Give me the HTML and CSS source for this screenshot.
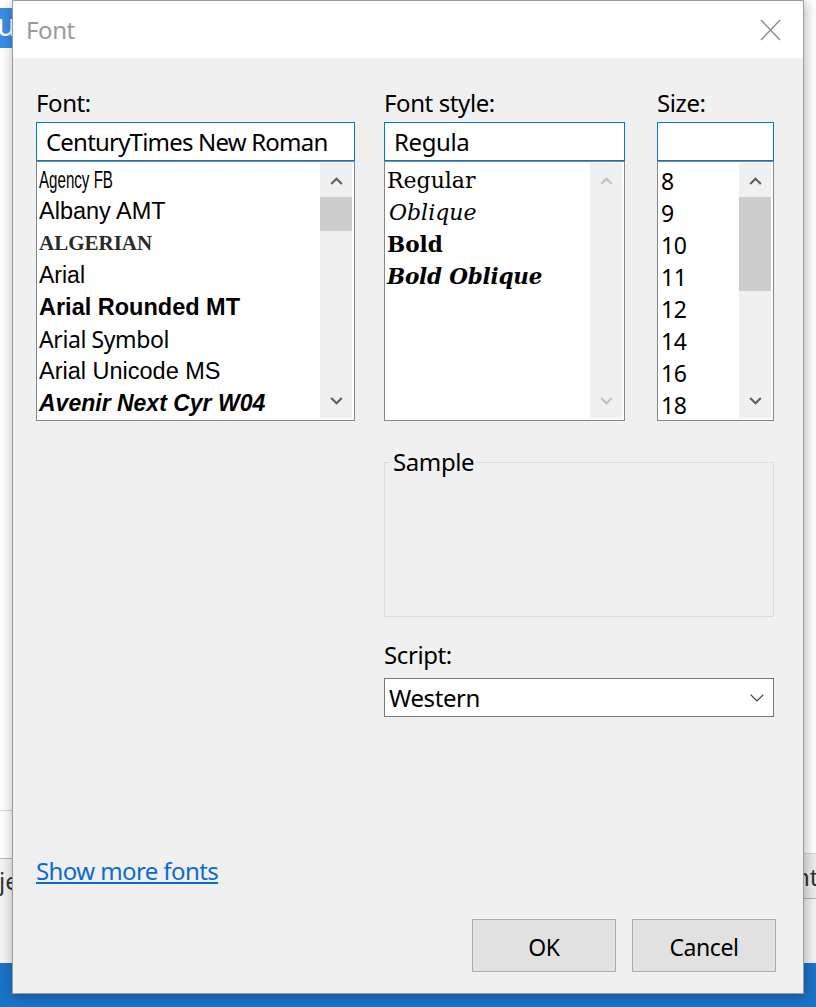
FILE: index.html
```html
<!DOCTYPE html>
<html lang="en">
<head>
<meta charset="utf-8">
<title>Font</title>
<link rel="stylesheet" href="styles.css">
</head>
<body>
<div class="desk">
  <div class="bg-tab"><span>u</span></div>
  <div class="bg-line"></div>
  <div class="bg-left-panel"><span>je</span></div>
  <div class="bg-right-panel"><span>nt</span></div>
  <div class="bg-right-lower"></div>
  <div class="taskbar"></div>
</div>

<div class="dialog">
  <div class="titlebar">
    <div class="title">Font</div>
    <svg class="close" width="21" height="22" viewBox="0 0 21 22"><path d="M1 1 L20 21 M20 1 L1 21" stroke="#8c8c8c" stroke-width="1.4" fill="none"/></svg>
  </div>

  <div class="body">
    <div class="cols">
      <div class="col col-font">
        <div class="label">Font:</div>
        <div class="input input-font">CenturyTimes New Roman</div>
        <div class="list">
          <div class="items items-font">
            <div class="item f-agency"><span>Agency FB</span></div>
            <div class="item f-arial f-albany">Albany AMT</div>
            <div class="item f-algerian">ALGERIAN</div>
            <div class="item f-arial">Arial</div>
            <div class="item f-rounded">Arial Rounded MT</div>
            <div class="item f-symbol">Arial Symbol</div>
            <div class="item f-arial f-unicode">Arial Unicode MS</div>
            <div class="item f-avenir">Avenir Next Cyr W04</div>
          </div>
          <div class="scroll">
            <div class="sb-btn sb-up"><svg width="13" height="8" viewBox="0 0 13 8"><path d="M1.2 7 L6.5 1.7 L11.8 7" stroke="#606060" stroke-width="2.2" fill="none"/></svg></div>
            <div class="thumb thumb-short"></div>
            <div class="sb-space"></div>
            <div class="sb-btn sb-down"><svg width="13" height="8" viewBox="0 0 13 8"><path d="M1.2 1 L6.5 6.3 L11.8 1" stroke="#606060" stroke-width="2.2" fill="none"/></svg></div>
          </div>
        </div>
      </div>

      <div class="col col-style">
        <div class="label">Font style:</div>
        <div class="input">Regula</div>
        <div class="list">
          <div class="items items-style">
            <div class="item s-regular">Regular</div>
            <div class="item s-oblique">Oblique</div>
            <div class="item s-bold">Bold</div>
            <div class="item s-boldoblique">Bold Oblique</div>
          </div>
          <div class="scroll">
            <div class="sb-btn sb-up"><svg width="13" height="8" viewBox="0 0 13 8"><path d="M1.2 7 L6.5 1.7 L11.8 7" stroke="#c2c2c2" stroke-width="2.2" fill="none"/></svg></div>
            <div class="sb-space"></div>
            <div class="sb-btn sb-down"><svg width="13" height="8" viewBox="0 0 13 8"><path d="M1.2 1 L6.5 6.3 L11.8 1" stroke="#c2c2c2" stroke-width="2.2" fill="none"/></svg></div>
          </div>
        </div>
      </div>

      <div class="col col-size">
        <div class="label">Size:</div>
        <div class="input"></div>
        <div class="list">
          <div class="items items-size">
            <div class="item">8</div>
            <div class="item">9</div>
            <div class="item">10</div>
            <div class="item">11</div>
            <div class="item">12</div>
            <div class="item">14</div>
            <div class="item">16</div>
            <div class="item">18</div>
          </div>
          <div class="scroll">
            <div class="sb-btn sb-up"><svg width="13" height="8" viewBox="0 0 13 8"><path d="M1.2 7 L6.5 1.7 L11.8 7" stroke="#606060" stroke-width="2.2" fill="none"/></svg></div>
            <div class="thumb thumb-tall"></div>
            <div class="sb-space"></div>
            <div class="sb-btn sb-down"><svg width="13" height="8" viewBox="0 0 13 8"><path d="M1.2 1 L6.5 6.3 L11.8 1" stroke="#606060" stroke-width="2.2" fill="none"/></svg></div>
          </div>
        </div>
      </div>
    </div>

    <div class="lower">
      <fieldset class="sample">
        <legend>Sample</legend>
      </fieldset>
      <div class="label script-label">Script:</div>
      <div class="select">
        <span>Western</span>
        <svg width="14" height="8" viewBox="0 0 14 8"><path d="M0.6 0.6 L7 7 L13.4 0.6" stroke="#3c3c3c" stroke-width="1.2" fill="none"/></svg>
      </div>
    </div>

    <a class="link" href="#">Show more fonts</a>

    <div class="buttons">
      <button class="btn">OK</button>
      <button class="btn">Cancel</button>
    </div>
  </div>
</div>
</body>
</html>
```

FILE: styles.css
```css
* { box-sizing: border-box; }

html, body {
  margin: 0;
  padding: 0;
}

body {
  width: 816px;
  height: 1007px;
  position: relative;
  overflow: hidden;
  background: #ffffff;
  font-family: "Noto Sans", "Open Sans", sans-serif;
  color: #000;
}

/* ---------- desktop behind the dialog ---------- */
.desk { position: absolute; inset: 0; }

.bg-tab {
  position: absolute;
  left: 0; top: 8px;
  width: 12px; height: 40px;
  background: #3a8de6;
  overflow: hidden;
  color: #fff;
  font-size: 30px;
  line-height: 34px;
}
.bg-tab span { display: block; margin-left: -3px; }

.bg-line {
  position: absolute;
  left: 0; top: 810px;
  width: 12px; height: 1px;
  background: #d9d9d9;
}

.bg-left-panel {
  position: absolute;
  left: 0; top: 858px;
  width: 12px; height: 105px;
  background: #f4f4f4;
  border-top: 1px solid #b8b8b8;
  overflow: hidden;
  font-size: 24px;
  line-height: 26px;
  color: #333;
}
.bg-left-panel span { display: block; margin: 9px 0 0 -1px; white-space: nowrap; }

.bg-right-panel {
  position: absolute;
  left: 804px; top: 853px;
  width: 12px; height: 46px;
  background: #ededed;
  border-top: 1px solid #d6d6d6;
  border-bottom: 1px solid #b3b3b3;
  overflow: hidden;
  font-size: 24px;
  line-height: 26px;
  color: #333;
}
.bg-right-panel span { display: block; margin: 10px 0 0 -9px; white-space: nowrap; }

.bg-right-lower {
  position: absolute;
  left: 804px; top: 899px;
  width: 12px; height: 64px;
  background: #f3f3f3;
}

.taskbar {
  position: absolute;
  left: 0; top: 963px;
  width: 816px; height: 44px;
  background: #1b73c9;
}

/* ---------- dialog window ---------- */
.dialog {
  position: absolute;
  left: 12px; top: 0;
  width: 792px;
  border: 1px solid #9c9c9c;
  background: #f0f0f0;
  box-shadow: 1px 2px 12px rgba(0, 0, 0, 0.32);
}

.titlebar {
  height: 57px;
  background: #ffffff;
  display: flex;
  justify-content: space-between;
  align-items: flex-start;
  padding: 16px 22px 0 13px;
}
.title {
  font-size: 24px;
  line-height: 26px;
  color: #9a9a9a;
  letter-spacing: -0.4px;
}
.close { margin-top: 2px; }

.body {
  padding: 32px 27px 21px 23px;
}

.cols { display: flex; }
.col-font { width: 319px; }
.col-style { width: 241px; margin-left: 29px; }
.col-size { width: 117px; margin-left: 32px; }

.label {
  font-size: 24px;
  line-height: 26px;
  letter-spacing: -0.4px;
  margin-bottom: 6px;
}

.input {
  height: 39px;
  border: 1px solid #0078d7;
  background: #fff;
  padding-left: 9px;
  font-size: 24px;
  line-height: 37px;
  letter-spacing: -0.4px;
  white-space: nowrap;
  overflow: hidden;
}
.input-font { letter-spacing: -0.8px; }

.list {
  height: 260px;
  border: 1px solid #828790;
  background: #fff;
  display: flex;
}

.items {
  flex: 1;
  padding-left: 2px;
  overflow: hidden;
}
.items-font { padding-top: 1px; }
.items-style { padding-top: 3px; }
.items-size { padding-left: 3px; padding-top: 3px; }

.item {
  height: 32px;
  line-height: 32px;
  white-space: nowrap;
  font-size: 23px;
  letter-spacing: -0.4px;
}

/* font-list item faces */
.f-agency span {
  display: inline-block;
  font-family: "Liberation Sans", sans-serif;
  font-size: 24px;
  letter-spacing: 0;
  transform: scaleX(0.63);
  transform-origin: left center;
}
.f-arial {
  font-family: "Liberation Sans", Arial, sans-serif;
  letter-spacing: 0;
}
.f-albany { font-size: 23.5px; }
.f-unicode { font-size: 23.5px; }
.f-algerian {
  font-family: "Liberation Serif", serif;
  font-weight: bold;
  font-size: 21px;
  letter-spacing: 0;
  color: #2a2a2a;
}
.f-rounded {
  font-family: "Liberation Sans", Arial, sans-serif;
  font-weight: bold;
  font-size: 23.5px;
  letter-spacing: 0;
}
.f-symbol { font-size: 23px; }
.f-avenir {
  font-family: "Liberation Sans", Arial, sans-serif;
  font-weight: bold;
  font-style: italic;
  font-size: 23px;
  letter-spacing: 0;
}

/* style-list item faces */
.s-regular, .s-oblique, .s-bold, .s-boldoblique {
  font-family: "DejaVu Serif", serif;
  font-size: 22px;
  letter-spacing: 0;
}
.s-oblique { font-style: italic; padding-left: 2px; }
.s-bold { font-weight: bold; font-size: 21.5px; }
.s-boldoblique { font-weight: bold; font-style: italic; font-size: 21.5px; letter-spacing: -0.2px; }

/* scrollbars */
.scroll {
  width: 32px;
  margin: 1px 2px 2px 0;
  background: #f0f0f0;
  display: flex;
  flex-direction: column;
}
.sb-btn {
  height: 34px;
  display: flex;
  align-items: center;
  justify-content: center;
}
.sb-up { padding-top: 2px; }
.sb-space { flex: 1; }
.thumb { background: #cdcdcd; }
.thumb-short { height: 34px; }
.thumb-tall { height: 94px; }

/* lower section */
.lower {
  margin-left: 348px;
  width: 390px;
}

.sample {
  margin: 28px 0 0;
  padding: 0;
  border: 1px solid #dcdcdc;
  height: 168px;
  min-width: 0;
}
.sample legend {
  margin-left: 6px;
  padding: 0 2px;
  font-size: 24px;
  line-height: 26px;
  letter-spacing: -0.4px;
}

.script-label {
  margin-top: 25px;
  margin-bottom: 10px;
}

.select {
  height: 39px;
  border: 1px solid #7a7a7a;
  background: #fff;
  display: flex;
  align-items: center;
  justify-content: space-between;
  padding: 0 9px 0 4px;
  font-size: 24px;
  line-height: 37px;
  letter-spacing: -0.4px;
}

.link {
  display: block;
  width: fit-content;
  margin-top: 141px;
  font-size: 24px;
  line-height: 26px;
  letter-spacing: -0.6px;
  color: #0a6ccf;
  text-decoration: underline;
  text-underline-offset: 2px;
}

.buttons {
  display: flex;
  justify-content: flex-end;
  gap: 16px;
  margin-top: 35px;
}
.btn {
  width: 144px;
  height: 53px;
  background: #e1e1e1;
  border: 1px solid #adadad;
  font-family: "Noto Sans", "Open Sans", sans-serif;
  font-size: 23px;
  letter-spacing: -0.4px;
  color: #000;
  padding: 3px 0 0;
}
```
